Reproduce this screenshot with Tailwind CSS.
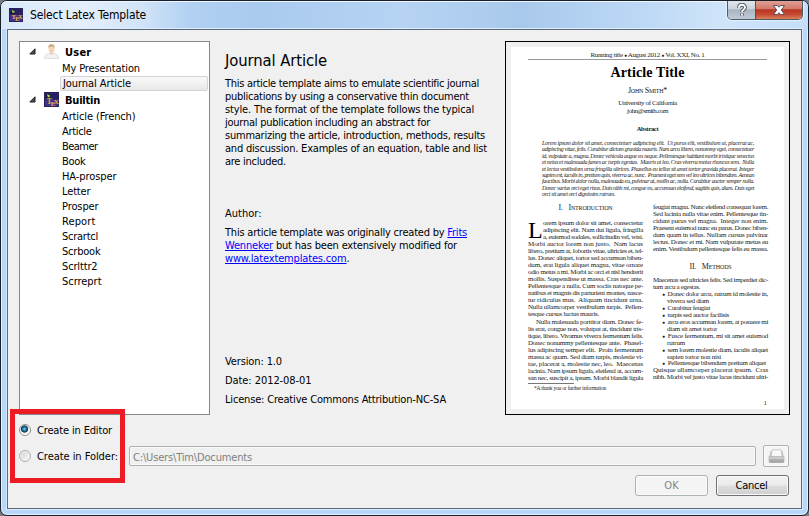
<!DOCTYPE html>
<html lang="en">
<head>
<meta charset="utf-8">
<title>Select Latex Template</title>
<script src="https://cdn.jsdelivr.net/npm/@tailwindcss/browser@4"></script>
</head>
<body class="w-[809px] h-[516px] overflow-hidden bg-[#777b80]">
<svg class="hidden">
  <symbol id="tex" viewBox="0 0 14 14">
    <rect width="14" height="14" fill="#29215f"/><rect x="1" y="7" width="12" height="6" fill="#41338c"/>
    <path d="M2 2h3v2H3v1h2v1H2z" fill="#151440"/><path d="M3 2.5l2 1.5M3.5 4.5l2-1" stroke="#b8e838" stroke-width="1.2"/>
    <text x="2.6" y="11" font-family="Liberation Serif, serif" font-size="7" font-weight="bold" fill="#e8b83c">T</text>
    <text x="6.2" y="12.6" font-family="Liberation Serif, serif" font-size="6" font-weight="bold" fill="#e8b83c">E</text>
    <text x="9" y="11" font-family="Liberation Serif, serif" font-size="6.5" font-weight="bold" fill="#e8b83c">X</text>
  </symbol>
</svg>
<div class="relative flex flex-col w-[809px] h-[516px] rounded-[7px] border border-[#18202c] bg-[#b9d7f8] shadow-[inset_0_0_0_1px_#e2f2ff] overflow-hidden font-['DejaVu_Sans_Condensed','DejaVu_Sans',sans-serif] text-[11px] leading-[13px] text-black">
  <div class="flex h-[28px] shrink-0 bg-[linear-gradient(90deg,#d9e9fa_0px,#e4effb_80px,#d2e4f8_140px,#b1d0f2_190px,#a9caef_260px,#b6d3f3_400px,#a9c9ec_520px,#bcd8f5_640px,#d0e4f9_720px,#c4def8_808px)] border-t border-[#edf6ff]">
    <svg class="w-[14px] h-[14px] ml-[8px] mt-[6px]"><use href="#tex"/></svg>
    <div class="ml-[7px] mt-[5px] text-[12px] leading-[16px]"><span data-w="116">Select Latex Template</span></div>
    <div class="ml-auto mr-[5px] -mt-px flex h-[19px] rounded-b-[5px] border border-t-0 border-[#4f5966] overflow-hidden shadow-[0_0_1px_1px_#e4f2ff]">
      <div class="w-[28px] flex items-center justify-center bg-[linear-gradient(#dfe5eb_0%,#cbd3dc_45%,#a8b4c2_48%,#bfcbd8_100%)] border-r border-[#6a4550]">
        <svg class="w-[12px] h-[14px]" viewBox="0 0 12 14" fill="none"><path d="M3 4.8C3 .8 9 .8 9 4.5 9 6.8 6 6.7 6 9M6 10.6v2" stroke="#4d535e" stroke-width="3.8"/><path d="M3 4.8C3 .8 9 .8 9 4.5 9 6.8 6 6.7 6 9M6 10.8v1.6" stroke="#fff" stroke-width="1.9"/></svg>
      </div>
      <div class="w-[46px] flex items-center justify-center bg-[linear-gradient(#dfa095_0%,#d27868_45%,#b73622_48%,#c64a31_75%,#d9805e_100%)]">
        <svg class="w-[14px] h-[12px]" viewBox="0 0 14 12"><path d="M1.5 1.5h4L7 3.3l1.5-1.8h4L9.3 6l3.2 4.5h-4L7 8.7l-1.5 1.8h-4L4.7 6z" fill="#fff" stroke="#565260" stroke-width="1"/></svg>
      </div>
    </div>
  </div>
  <div class="flex flex-col w-[795px] h-[480px] ml-[6px] border border-[#5c6b7a] outline outline-[#d8ebff] bg-[#f0f0f0] pl-[11px] pt-[11px]">
    <div class="flex h-[374px] w-[771px]">
      <div id="tree" class="w-[191px] h-[374px] shrink-0 border border-[#828790] bg-white pt-px px-px"></div>
      <div class="w-[295px] shrink-0 pl-[15px] flex flex-col">
        <div class="mt-[9px] text-[16.5px] leading-[22px]"><span data-w="102">Journal Article</span></div>
        <div class="mt-[5px]">
          <div><span data-w="254">This article template aims to emulate scientific journal</span></div>
          <div><span data-w="244">publications by using a conservative thin document</span></div>
          <div><span data-w="249">style. The format of the template follows the typical</span></div>
          <div><span data-w="205">journal publication including an abstract for</span></div>
          <div><span data-w="260">summarizing the article, introduction, methods, results</span></div>
          <div><span data-w="262">and discussion. Examples of an equation, table and list</span></div>
          <div><span data-w="61">are included.</span></div>
        </div>
        <div class="mt-[39px]"><span data-w="36.5">Author:</span></div>
        <div class="mt-[6px]">
          <div><span data-w="242">This article template was originally created by <a class="text-[#0000ff] underline">Frits</a></span></div>
          <div><span data-w="232"><a class="text-[#0000ff] underline">Wenneker</a> but has been extensively modified for</span></div>
          <div><span data-w="124.5"><a class="text-[#0000ff] underline">www.latextemplates.com</a>.</span></div>
        </div>
        <div class="mt-[90px]"><span data-w="57">Version: 1.0</span></div>
        <div class="mt-[6px]"><span data-w="86.5">Date: 2012-08-01</span></div>
        <div class="mt-[6px]"><span data-w="221">License: Creative Commons Attribution-NC-SA</span></div>
      </div>
      <div class="w-[285px] h-[374px] shrink-0 border border-black p-[5px]">
        <div class="w-[273px] h-[362px] bg-white font-['Liberation_Serif',serif] text-[#1c1c1c] text-center text-[7px] leading-[7px] pt-[5px]">
          <div class="mx-[17px] h-[8px] border-b border-[#999]"><span data-w="114">Running title ● August 2012 ● Vol. XXI, No. 1</span></div>
          <div class="mt-[4px] text-[14px] leading-[18px] font-bold text-black"><span data-w="74">Article Title</span></div>
          <div class="mt-[5px] text-[8px] leading-[8px] [font-variant:small-caps]"><span data-w="39">John Smith*</span></div>
          <div class="mt-[4px] leading-[8px]"><span data-w="58.5">University of California</span></div>
          <div class="leading-[8px]"><span data-w="41">john@smith.com</span></div>
          <div class="mt-[10px] leading-[8px] text-[6.5px] font-bold"><span data-w="21.5">Abstract</span></div>
          <div id="abs" class="mt-[7px] ml-[31px] text-left italic text-[6px]"></div>
          <div class="flex mt-[7px] ml-[17px] text-left">
            <div class="w-[115px] shrink-0">
              <div class="h-[8px] leading-[8px] text-[8px] text-center [font-variant:small-caps]"><span data-w="54">I.&nbsp;&nbsp; Introduction</span></div>
              <div class="mt-[8px] flex">
                <span class="w-[15px] h-[20.88px] shrink-0 text-[24px] leading-[21px] text-black">L</span>
                <div id="drop"></div>
              </div>
              <div id="l1"></div>
              <div id="l2" class="mt-[1.3px]"></div>
              <div class="mt-px w-[46px] border-t border-[#777]"></div>
              <div class="ml-[6px] mt-px text-[5.5px] leading-[6px]"><span data-w="72">*A thank you or further information</span></div>
            </div>
            <div class="w-[115px] ml-[10px] shrink-0">
              <div id="r1"></div>
              <div class="mt-[10px] h-[8px] leading-[8px] text-[8px] text-center [font-variant:small-caps]"><span data-w="42">II.&nbsp;&nbsp; Methods</span></div>
              <div id="r2" class="mt-[6px]"></div>
              <div class="mt-[19px] pr-px text-right">1</div>
            </div>
          </div>
        </div>
      </div>
    </div>
    <div class="flex items-center mt-[8px] h-[14px]">
      <span class="w-[12px] h-[12px] rounded-full border border-[#8e8f8f] bg-[radial-gradient(circle_at_45%_40%,#7fdcff_0,#2487b8_1.5px,#12384f_3.2px,#e8e8e8_4px,#fff_5px)]"></span>
      <span class="ml-[6px]"><span data-w="75">Create in Editor</span></span>
    </div>
    <div class="flex items-center mt-[8px] h-[22px] w-[771px]">
      <span class="w-[12px] h-[12px] shrink-0 rounded-full border border-[#aaaeb2] bg-[linear-gradient(135deg,#cfd2d5,#fdfdfd)] shadow-[inset_0_0_0_1px_#f4f4f4]"></span>
      <span class="ml-[6px] w-[92px] shrink-0"><span data-w="81">Create in Folder:</span></span>
      <div class="w-[627px] h-[20px] shrink-0 rounded-[2px] border border-[#afafaf] bg-[#f0f0f0] shadow-[inset_0_0_0_1px_#fafafa] text-[#808080] pl-[3px] pt-[4px] leading-[13px]"><span data-w="119">C:\Users\Tim\Documents</span></div>
      <div class="ml-[7px] w-[26px] h-[22px] shrink-0 rounded-[2px] border border-[#adb2b5] bg-[#f4f4f4] shadow-[inset_0_0_0_1px_#fcfcfc] flex items-center justify-center">
        <svg class="w-[17px] h-[15px]" viewBox="0 0 17 15"><path d="M2.5 2h12l1.5 6H1z" fill="#c9c9c9"/><path d="M4 .8h9.2l.8 7H3.2z" fill="#f7f7f7" stroke="#b8b8b8" stroke-width=".7"/><path d="M.7 7.2h15.6v5.3q0 1.6-1.6 1.6H2.3q-1.6 0-1.6-1.6z" fill="#b0b0b0"/><path d="M1.2 7.7h14.6v2.2H1.2z" fill="#cbcbcb"/><path d="M2 12.4h13" stroke="#a0a0a0"/></svg>
      </div>
    </div>
    <div class="flex mt-[8px] pl-[616px]">
      <div class="w-[73px] h-[21px] rounded-[3px] border border-[#adb2b5] bg-[#f4f4f4] shadow-[inset_0_0_0_1px_#fbfbfb] text-[#838383] text-center leading-[20px]"><span data-w="14.5">OK</span></div>
      <div class="ml-[8px] w-[73px] h-[21px] rounded-[3px] border border-[#707070] bg-[linear-gradient(#f2f2f2_0%,#ebebeb_48%,#dddddd_52%,#cfcfcf_100%)] shadow-[inset_0_0_0_1px_#fbfbfb] text-center leading-[20px] pr-[2px]"><span data-w="32">Cancel</span></div>
    </div>
  </div>
  <div class="absolute left-[9px] top-[408px] w-[115px] h-[74px] border-[5px] border-[#ed1c24]"></div>
</div>
<script>
const $ = id => document.getElementById(id);
const arrow = '<svg class="absolute left-[8px] top-[5px] w-[7px] h-[7px]" viewBox="0 0 7 7"><path d="M6 .8V6H.8z" fill="#505050" stroke="#1c1c1c" stroke-width="1"/></svg>';
const person = '<svg class="absolute left-[23px] top-[1px] w-[15px] h-[15px]" viewBox="0 0 15 15"><path d="M.5 14.4c0-3.2 2-4.6 5-5h4c3 .4 5 1.8 5 5z" fill="#f1f3f5" stroke="#cfd4d8" stroke-width=".7"/><path d="M5.5 8.5h4L7.5 11.5z" fill="#efc9a4"/><ellipse cx="7.5" cy="5" rx="2.9" ry="4" fill="#f3d3b0"/><path d="M4.3 4.5C4 .5 6 .2 7.5.2s3.5.4 3.2 4.3C10 2.5 8.5 2.6 7.5 2.6s-2.600 0-3.2 1.9z" fill="#c9a77e"/></svg>';
const tex = '<svg class="absolute left-[23px] top-[1px] w-[15px] h-[15px]" viewBox="0 0 14 14"><use href="#tex"/></svg>';
const group = (n, w, ic) => `<div class="relative h-[18px] pl-[44px] pt-[3px] font-bold">${arrow}${ic}<span data-w="${w}">${n}</span></div>`;
const item = ([n, w]) => n === 'Journal Article'
  ? `<div class="h-[15px] ml-[39px] pl-[2px] rounded-[2px] border border-[#d4d4d4] bg-[linear-gradient(#f9f9f9,#e8e8e8)]"><span data-w="${w}">${n}</span></div>`
  : `<div class="h-[15px] pl-[41px] pt-px"><span data-w="${w}">${n}</span></div>`;
$('tree').innerHTML = group('User', 26.5, person)
  + [['My Presentation',78],['Journal Article',68]].map(item).join('')
  + group('Builtin', 35, tex)
  + [['Article (French)',73.5],['Article',29.5],['Beamer',35.5],['Book',23.5],['HA-prosper',54.5],['Letter',28.5],['Prosper',36.5],['Report',33.5],['Scrartcl',36],['Scrbook',38.5],['Scrlttr2',35.5],['Scrreprt',39.5]].map(item).join('');

const lines = (id, rows, cls) => { $(id).innerHTML = rows.map(([t, w, x = 0]) =>
  `<div class="${cls}" style="padding-left:${x}px"><span data-w="${w}">${t}</span></div>`).join(''); };
lines('abs', [
  ['Lorem ipsum dolor sit amet, consectetuer adipiscing elit.&nbsp; Ut purus elit, vestibulum ut, placerat ac,',212],
  ['adipiscing vitae, felis. Curabitur dictum gravida mauris. Nam arcu libero, nonummy eget, consectetuer',212],
  ['id, vulputate a, magna. Donec vehicula augue eu neque. Pellentesque habitant morbi tristique senectus',212],
  ['et netus et malesuada fames ac turpis egestas.&nbsp; Mauris ut leo. Cras viverra metus rhoncus sem.&nbsp; Nulla',212],
  ['et lectus vestibulum urna fringilla ultrices. Phasellus eu tellus sit amet tortor gravida placerat. Integer',212],
  ['sapien est, iaculis in, pretium quis, viverra ac, nunc.&nbsp; Praesent eget sem vel leo ultrices bibendum. Aenean',212],
  ['faucibus. Morbi dolor nulla, malesuada eu, pulvinar at, mollis ac, nulla. Curabitur auctor semper nulla.',212],
  ['Donec varius orci eget risus. Duis nibh mi, congue eu, accumsan eleifend, sagittis quis, diam. Duis eget',212],
  ['orci sit amet orci dignissim rutrum.',73]], 'h-[6.38px] leading-[6.38px]');
const body = 'h-[6.96px] leading-[6.96px]';
lines('drop', [
  ['orem ipsum dolor sit amet, consectetur',100],['adipiscing elit. Nam dui ligula, fringilla',100],
  ['a, euismod sodales, sollicitudin vel, wisi.',100]], body);
lines('l1', [
  ['Morbi auctor lorem non justo.&nbsp; Nam lacus',115],
  ['libero, pretium at, lobortis vitae, ultricies et, tel-',115],['lus. Donec aliquet, tortor sed accumsan biben-',115],
  ['dum, erat ligula aliquet magna, vitae ornare',115],['odio metus a mi. Morbi ac orci et nisl hendrerit',115],
  ['mollis. Suspendisse ut massa. Cras nec ante.',115],['Pellentesque a nulla. Cum sociis natoque pe-',115],
  ['natibus et magnis dis parturient montes, nasce-',115],['tur ridiculus mus.&nbsp; Aliquam tincidunt urna.',115],
  ['Nulla ullamcorper vestibulum turpis.&nbsp; Pellen-',115],['tesque cursus luctus mauris.',71]], body);
lines('l2', [
  ['Nulla malesuada porttitor diam. Donec fe-',107,8],['lis erat, congue non, volutpat at, tincidunt tris-',115],
  ['tique, libero. Vivamus viverra fermentum felis.',115],['Donec nonummy pellentesque ante.&nbsp; Phasel-',115],
  ['lus adipiscing semper elit.&nbsp; Proin fermentum',115],['massa ac quam. Sed diam turpis, molestie vi-',115],
  ['tae, placerat a, molestie nec, leo.&nbsp; Maecenas',115],['lacinia. Nam ipsum ligula, eleifend at, accum-',115],
  ['san nec, suscipit a, ipsum. Morbi blandit ligula',115]], body);
lines('r1', [
  ['feugiat magna. Nunc eleifend consequat lorem.',115],['Sed lacinia nulla vitae enim. Pellentesque tin-',115],
  ['cidunt purus vel magna.&nbsp; Integer non enim.',115],['Praesent euismod nunc eu purus. Donec biben-',115],
  ['dum quam in tellus. Nullam cursus pulvinar',115],['lectus. Donec et mi. Nam vulputate metus eu',115],
  ['enim. Vestibulum pellentesque felis eu massa.',115]], body);
lines('r2', [
  ['Maecenas sed ultricies felis. Sed imperdiet dic-',115],['tum arcu a egestas.',47],
  ['●&nbsp; Donec dolor arcu, rutrum id molestie in,',106,9],['viverra sed diam',42,14],
  ['●&nbsp; Curabitur feugiat',48,9],['●&nbsp; turpis sed auctor facilisis',67,9],
  ['●&nbsp; arcu eros accumsan lorem, at posuere mi',106,9],['diam sit amet tortor',50,14],
  ['●&nbsp; Fusce fermentum, mi sit amet euismod',106,9],['rutrum',18,14],
  ['●&nbsp; sem lorem molestie diam, iaculis aliquet',106,9],['sapien tortor non nisi',54,14],
  ['●&nbsp; Pellentesque bibendum pretium aliquet',104,9],['Quisque ullamcorper placerat ipsum.&nbsp; Cras',115],
  ['nibh. Morbi vel justo vitae lacus tincidunt ultri-',115]], body);

// Bullets sit smaller than the surrounding text.
const spans = [...document.querySelectorAll('[data-w]')];
spans.forEach(s => {
  if (s.textContent.includes('●')) s.innerHTML = s.innerHTML.replace(/●/g, '<span class="text-[5px] align-[0.5px] leading-[0px]">●</span>');
  s.style.whiteSpace = 'nowrap';
});
function fit() {
  spans.forEach(s => { s.style.letterSpacing = '0px'; });
  const natural = spans.map(s => s.getBoundingClientRect().width);
  spans.forEach((s, i) => { s.style.letterSpacing = ((+s.dataset.w - natural[i]) / s.textContent.length) + 'px'; });
}
fit();
addEventListener('load', fit);
new ResizeObserver(fit).observe($('tree'));
[0, 50, 150].forEach(t => setTimeout(fit, t));
</script>
</body>
</html>
